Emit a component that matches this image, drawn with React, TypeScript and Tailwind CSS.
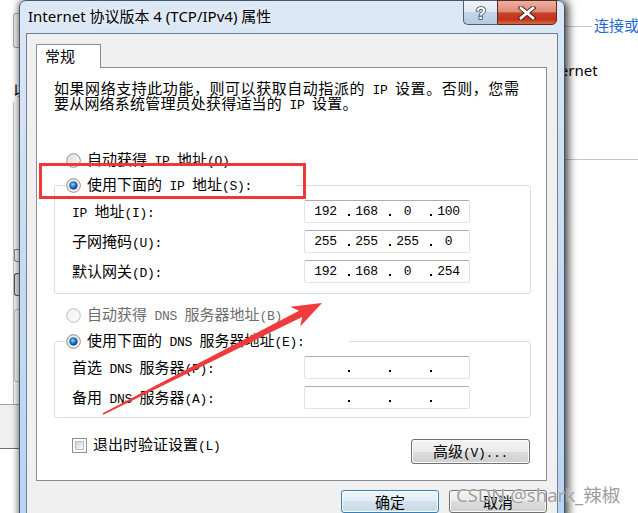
import React, { useId } from 'react';

const CJK = /[\u2E80-\u9FFF\uFF00-\uFFEF\u3000-\u303F]/;

function T({ text, className = '' }: { text: string; className?: string }) {
  const runs: { c: boolean; s: string }[] = [];
  for (const ch of Array.from(text)) {
    const c = CJK.test(ch);
    const l = runs[runs.length - 1];
    if (l && l.c === c) l.s += ch;
    else runs.push({ c, s: ch });
  }
  return (
    <span className={`whitespace-pre leading-[15px] ${className}`}>
      {runs.map((r, i) =>
        r.c ? (
          <span key={i} className="font-['Noto_Sans_CJK_SC',sans-serif] text-[15px] leading-[15px]">
            {r.s}
          </span>
        ) : (
          <span key={i} className="font-['Liberation_Mono',monospace] text-[13px] leading-[15px] tracking-[-0.3px]">
            {r.s}
          </span>
        )
      )}
    </span>
  );
}

function Radio({ checked = false, disabled = false }: { checked?: boolean; disabled?: boolean }) {
  const id = useId().replace(/:/g, '');
  return (
    <svg width="15" height="15" viewBox="0 0 15 15" className="shrink-0">
      <defs>
        <linearGradient id={`f${id}`} x1="0" y1="0" x2="1" y2="1">
          <stop offset="0" stopColor={disabled ? '#eeeeee' : '#d6d6d6'} />
          <stop offset="1" stopColor="#ffffff" />
        </linearGradient>
        <radialGradient id={`d${id}`} cx="0.4" cy="0.35" r="0.7">
          <stop offset="0" stopColor="#8fe0ff" />
          <stop offset="0.45" stopColor="#2a8ad6" />
          <stop offset="1" stopColor="#0c3f7a" />
        </radialGradient>
      </defs>
      <circle cx="7.5" cy="7.5" r="6.8" fill={`url(#f${id})`} stroke={disabled ? '#bcbcbc' : '#8a8a8a'} strokeWidth="1" />
      <circle cx="7.5" cy="7.5" r="5.4" fill="none" stroke={disabled ? '#f2f2f2' : '#f4f4f4'} strokeWidth="0.8" />
      {checked && <circle cx="7.5" cy="7.5" r="3.8" fill={`url(#d${id})`} stroke="#173f70" strokeWidth="0.7" />}
    </svg>
  );
}

function IPBox({ parts }: { parts?: string[] }) {
  return (
    <div className="h-[23px] w-[166px] rounded-[2px] border border-[#e2e3ea] border-t-[#abadb3] bg-white flex">
      {[0, 1, 2, 3].map((i) => (
        <div key={i} className="relative w-[41px] h-full flex items-center justify-center">
          <span className="font-['Liberation_Mono',monospace] text-[13px] leading-[15px] tracking-[-0.3px] text-black">
            {parts ? parts[i] : ''}
          </span>
          {i < 3 && <span className="absolute left-[43px] top-[13px] w-[2px] h-[2px] bg-black" />}
        </div>
      ))}
    </div>
  );
}

function Row({ label, parts }: { label: string; parts?: string[] }) {
  return (
    <div className="flex items-center h-[23px]">
      <div className="w-[232px] text-black">
        <T text={label} />
      </div>
      <IPBox parts={parts} />
    </div>
  );
}

function LeftStrip() {
  return (
    <div className="w-[19px] shrink-0 flex flex-col bg-white overflow-hidden">
      <div className="h-[13px]" />
      <div className="ml-[13px] h-[35px] border border-r-0 border-[#a9a9a9] rounded-l-[3px] bg-[#f4f4f4]" />
      <div className="mt-[34px] h-[16px] pl-[13px] whitespace-nowrap font-['Noto_Sans_CJK_SC',sans-serif] text-[15px] leading-[16px] text-black">
        以
      </div>
      <div className="mt-[4px] ml-[13px] h-[302px] border-l border-[#c4c4c4] flex flex-col">
        <div className="h-[147px]" />
        <div className="h-[13px] border border-r-0 border-[#8a8a8a] rounded-bl-[3px]" />
        <div className="mt-[11px] h-[23px] border border-r-0 border-[#555] rounded-l-[3px] bg-[#ececec]" />
        <div className="mt-[13px] h-[73px] border border-r-0 border-[#c9c9c9] rounded-l-[3px]" />
      </div>
      <div className="h-[45px] border-t border-b border-t-[#a3a3a3] border-b-[#6f6f6f] bg-[#efefef]" />
    </div>
  );
}

function RightArea() {
  return (
    <div className="flex-1 flex flex-col bg-white overflow-hidden">
      <div className="mt-[16px] h-[18px] flex items-center leading-[18px]">
        <div className="w-[27px] h-px bg-[#c9c9c9] mt-[3px] shrink-0" />
        <span className="ml-[2px] whitespace-nowrap text-[#1f6bd3] font-['Noto_Sans_CJK_SC',sans-serif] text-[15px] leading-[18px]">
          连接或断开
        </span>
      </div>
      <div className="mt-[26px] h-[20px] whitespace-nowrap leading-[20px]">
        <span className="ml-[-25px] font-['Noto_Sans',sans-serif] text-[15px] leading-[20px] text-black">Internet</span>
      </div>
      <div className="mt-[79px] h-px bg-[#c6c6c6]" />
    </div>
  );
}

function CaptionButtons() {
  return (
    <div className="flex -mt-[1px] pr-[1px]">
      <div className="w-[34px] h-[25px] border border-r-0 border-[#4e5f74] rounded-bl-[5px] bg-[linear-gradient(180deg,#eef4fa_0%,#dfe8f3_45%,#c4d5e8_50%,#b6cbe2_100%)] flex items-center justify-center">
        <svg width="14" height="18" viewBox="0 0 14 18">
          <text
            x="7"
            y="15"
            textAnchor="middle"
            fontSize="17"
            fontWeight="bold"
            fontFamily="Liberation Sans, sans-serif"
            fill="#ffffff"
            stroke="#3b4a5c"
            strokeWidth="1.6"
            paintOrder="stroke"
          >
            ?
          </text>
        </svg>
      </div>
      <div className="w-[60px] h-[25px] border border-[#5a2a22] rounded-br-[5px] bg-[linear-gradient(180deg,#ecb0a2_0%,#df8c78_46%,#c9432a_52%,#c2331b_80%,#d86a45_100%)] flex items-center justify-center">
        <svg width="20" height="14" viewBox="0 0 20 14">
          <path d="M4 2 L16 12 M16 2 L4 12" stroke="#3b1d18" strokeWidth="4.6" strokeLinecap="square" />
          <path d="M4 2 L16 12 M16 2 L4 12" stroke="#ffffff" strokeWidth="2.8" strokeLinecap="square" />
        </svg>
      </div>
    </div>
  );
}

function Window() {
  return (
    <div className="relative z-10 w-[546px] h-[540px] shrink-0 rounded-t-[7px] border border-[#44566a] bg-[linear-gradient(180deg,#dce8f5_0%,#d2e2f3_25%,#c4daf1_55%,#b7d4f4_100%)] shadow-[4px_0_9px_rgba(0,0,0,0.65),-2px_0_6px_rgba(0,0,0,0.35)] flex flex-col px-[6px]">
      <div className="h-[32px] flex justify-between items-start shrink-0">
        <div className="pl-[2px] pt-[5px] whitespace-nowrap font-['Noto_Sans','Noto_Sans_CJK_SC',sans-serif] text-[15px] leading-[20px] text-black [text-shadow:0_0_6px_rgba(255,255,255,0.9)]">
          Internet 协议版本 4 (TCP/IPv4) 属性
        </div>
        <CaptionButtons />
      </div>
      <div className="flex-1 border border-[#6e8094] bg-[#f0f0f0] pt-[10px] pl-[9px] pr-[10px] flex flex-col">
        <div className="relative z-10 w-[65px] h-[24px] -mb-[1px] border border-b-0 border-[#898c95] bg-white pl-[8px] pt-[3px] text-black leading-[15px]">
          <T text="常规" />
        </div>
        <div className="h-[414px] border border-[#898c95] bg-white flex flex-col text-black">
          <div className="pl-[17px] pt-[12px] flex flex-col leading-[15px]">
            <div className="h-[15px] leading-[15px] tracking-[0.55px]">
              <T text="如果网络支持此功能，则可以获取自动指派的 IP 设置。否则，您需" />
            </div>
            <div className="h-[15px] leading-[15px] tracking-[0.2px]">
              <T text="要从网络系统管理员处获得适当的 IP 设置。" />
            </div>
          </div>
          <div className="mt-[41px] h-[18px] pl-[29px] flex items-center gap-[6px]">
            <Radio />
            <T text="自动获得 IP 地址(O)" />
          </div>
          <fieldset className="mt-[7px] ml-[17px] w-[477px] border border-[#d5dfe5] rounded-[3px]">
            <legend className="ml-[10px] w-[231px] pl-[1px]">
              <div className="h-[18px] flex items-center gap-[6px]">
                <Radio checked />
                <T text="使用下面的 IP 地址(S):" />
              </div>
            </legend>
            <div className="pl-[17px] pt-[6px] pb-[10px] flex flex-col gap-[7px]">
              <Row label="IP 地址(I):" parts={['192', '168', '0', '100']} />
              <Row label="子网掩码(U):" parts={['255', '255', '255', '0']} />
              <Row label="默认网关(D):" parts={['192', '168', '0', '254']} />
            </div>
          </fieldset>
          <div className="mt-[12px] h-[18px] pl-[29px] flex items-center gap-[6px] text-[#6d6d6d]">
            <Radio disabled />
            <T text="自动获得 DNS 服务器地址(B)" />
          </div>
          <fieldset className="mt-[8px] ml-[17px] w-[477px] border border-[#d5dfe5] rounded-[3px]">
            <legend className="ml-[10px] w-[284px] pl-[1px]">
              <div className="h-[18px] flex items-center gap-[6px]">
                <Radio checked />
                <T text="使用下面的 DNS 服务器地址(E):" />
              </div>
            </legend>
            <div className="pl-[17px] pt-[6px] pb-[8px] flex flex-col gap-[7px]">
              <Row label="首选 DNS 服务器(P):" />
              <Row label="备用 DNS 服务器(A):" />
            </div>
          </fieldset>
          <div className="mt-[18px] pl-[35px] pr-[16px] flex justify-between items-start">
            <div className="h-[18px] flex items-center gap-[6px]">
              <div className="w-[15px] h-[15px] border border-[#8e8f8f] bg-white p-[2px]">
                <div className="w-full h-full border border-[#b9bdc3] bg-[linear-gradient(135deg,#cfd3d8_0%,#e9ebee_60%,#f8f8f8_100%)]" />
              </div>
              <T text="退出时验证设置(L)" />
            </div>
            <div className="mt-[3px] w-[119px] h-[25px] rounded-[3px] border border-[#707070] bg-[linear-gradient(180deg,#f3f3f3_0%,#ebebeb_50%,#dddddd_50%,#cfcfcf_100%)] shadow-[inset_0_0_0_1px_#fbfbfb] flex items-center justify-center text-black">
              <T text="高级(V)..." />
            </div>
          </div>
        </div>
        <div className="mt-[9px] flex justify-end gap-[10px]">
          <div className="w-[98px] h-[23px] rounded-[3px] border border-[#3c7fb1] bg-[linear-gradient(180deg,#eef4f9_0%,#e3edf5_50%,#d3e3ef_50%,#c6dae9_100%)] shadow-[inset_0_0_0_1px_#f6fbff] flex items-center justify-center text-black">
            <T text="确定" />
          </div>
          <div className="w-[98px] h-[23px] rounded-[3px] border border-[#707070] bg-[linear-gradient(180deg,#f3f3f3_0%,#ebebeb_50%,#dddddd_50%,#cfcfcf_100%)] shadow-[inset_0_0_0_1px_#fbfbfb] flex items-center justify-center text-black">
            <T text="取消" />
          </div>
        </div>
      </div>
    </div>
  );
}

export default function App() {
  return (
    <div className="relative w-[638px] h-[513px] overflow-hidden bg-white flex leading-[15px]">
      <LeftStrip />
      <Window />
      <RightArea />
      <div className="absolute left-[39px] top-[163px] w-[267px] h-[36px] border-[3px] border-[#ee3838] z-20 pointer-events-none" />
      <svg className="absolute left-0 top-0 z-20 pointer-events-none" width="638" height="513" viewBox="0 0 638 513">
        <polygon
          points="103.4,414.7 302.2,316.9 300.2,326.4 322,303 290.2,306.8 299.0,310.7 102.6,413.3"
          fill="#ef3b3b"
        />
      </svg>
      <div className="absolute left-[456px] top-[482px] z-20 whitespace-nowrap font-['Noto_Sans','Noto_Sans_CJK_SC',sans-serif] text-[18.5px] leading-[26px] text-[#9e9e9e] [text-shadow:0_0_1px_#ffffff]">
        CSDN @shark_辣椒
      </div>
    </div>
  );
}
